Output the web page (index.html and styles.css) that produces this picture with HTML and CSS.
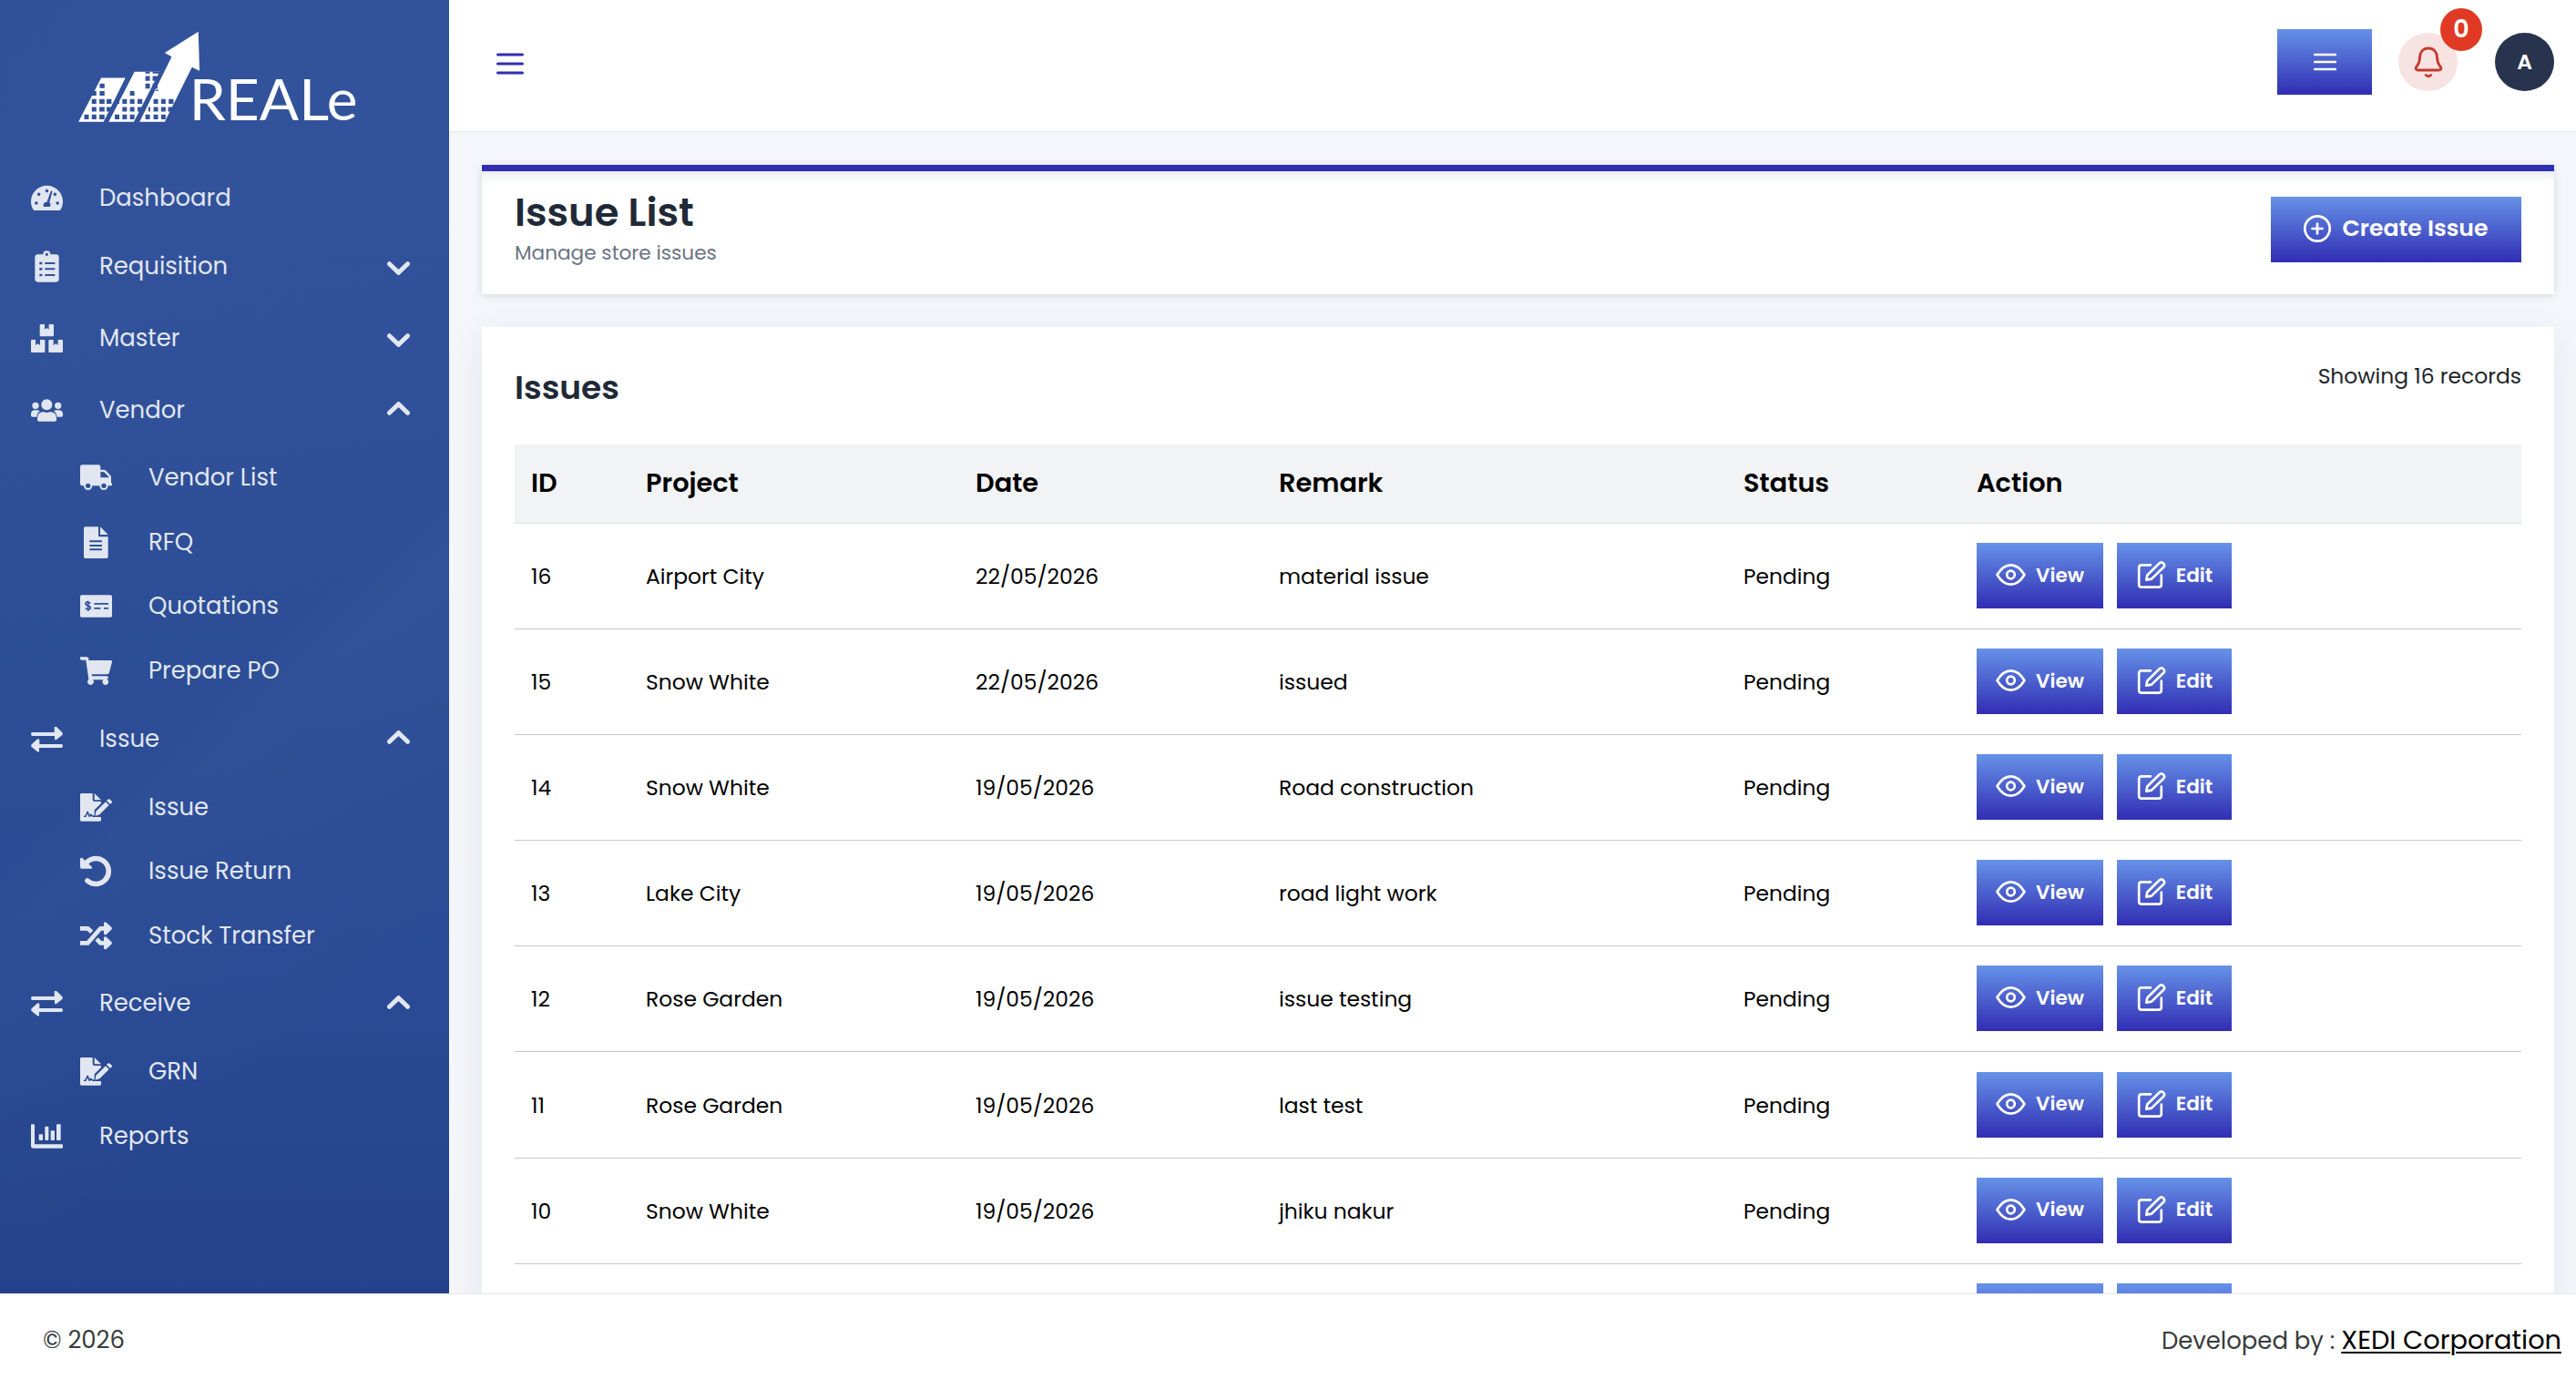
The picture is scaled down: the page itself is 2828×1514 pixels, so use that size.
FILE: index.html
```html
<!DOCTYPE html>
<html lang="en">
<head>
<meta charset="UTF-8">
<title>Issue List</title>
<link rel="stylesheet" href="styles.css">
</head>
<body>

<!-- icon sprite -->
<svg class="sprite">
    <symbol id="gauge" viewBox="0 0 576 576">
        <path fill-rule="evenodd" d="M288 62C129 62 0 191 0 350c0 53 14 102 39 145 6 10 16 15 27 15h444c11 0 21-5 27-15 25-43 39-92 39-145C576 191 447 62 288 62zM288 128a30 30 0 1 1 0 60 30 30 0 0 1 0-60zM142 190a30 30 0 1 1 0 60 30 30 0 0 1 0-60zM96 348a30 30 0 1 1 0 60 30 30 0 0 1 0-60zM480 348a30 30 0 1 1 0 60 30 30 0 0 1 0-60zM434 190a30 30 0 1 1 0 60 30 30 0 0 1 0-60zM358 160c14-8 30 0 27 18l-51 190c28 22 22 56 10 75H232c-20-34-4-85 56-87z"/>
    </symbol>
    <symbol id="clipboard" viewBox="0 0 105 105">
        <path fill-rule="evenodd" d="M23 13H40a12 12 0 0 1 24 0H82q10 0 10 10V94q0 10-10 10H23q-10 0-10-10V23q0-10 10-10zM52 8a5 5 0 1 0 0 10 5 5 0 0 0 0-10zM28 38h9v8h-9zM28 57h9v8h-9zM28 77h9v8h-9zM46 39h33v6H46zM46 58h33v6H46zM46 78h33v6H46z"/>
    </symbol>
    <symbol id="boxes" viewBox="0 0 105 105">
        <path d="M32 6H45V23l7-5 7 5V6H72q3 0 3 3V43q0 3-3 3H32q-3 0-3-3V9q0-3 3-3zM3 57H15V75l8-5 7 5V57H43q3 0 3 3V96q0 3-3 3H3q-3 0-3-3V60q0-3 3-3zM61 57H74V75l8-5 7 5V57H102q3 0 3 3V96q0 3-3 3H61q-3 0-3-3V60q0-3 3-3z"/>
    </symbol>
    <symbol id="users" viewBox="0 0 105 105">
        <circle cx="52" cy="34" r="18"/><circle cx="15" cy="37" r="11"/><circle cx="89" cy="37" r="11"/>
        <path d="M38 58h5q9 4 18 0h5q18 2 18 21v4q0 6-6 6H27q-6 0-6-6V79q0-19 17-21zM12 52h9q5 0 8 3-9 6-10 19H5q-5 0-5-5V64q0-10 12-12zM84 52h9q12 2 12 12v5q0 5-5 5H86q-2-13-10-19 3-3 8-3z"/>
    </symbol>
    <symbol id="truck" viewBox="0 0 105 105">
        <path fill-rule="evenodd" d="M7 10H60q7 0 7 7V26H78q4 0 7 3l14 15q3 3 3 7V69q3 0 3 5t-4 5H92a14 14 0 0 1-28 0H40a14 14 0 0 1-28 0H7q-7 0-7-7V17q0-7 7-7zM67 33V52H96L79 34zM26 71a8 8 0 1 0 0 16 8 8 0 0 0 0-16zM78 71a8 8 0 1 0 0 16 8 8 0 0 0 0-16z"/>
    </symbol>
    <symbol id="file" viewBox="0 0 105 105">
        <path fill-rule="evenodd" d="M17 1H60V29q0 5 5 5H92V100q0 5-5 5H17q-5 0-5-5V6q0-5 5-5zM31 46H72v6H31zM31 60H72v6H31zM31 73H72v6H31z"/><path d="M66 1L92 27H66z"/>
    </symbol>
    <symbol id="money" viewBox="0 0 105 105">
        <path fill-rule="evenodd" d="M5 16H100q5 0 5 5V84q0 5-5 5H5q-5 0-5-5V21q0-5 5-5zM46 42H93v5H46zM46 57H67v5H46zM78 57H93v5H78z"/>
        <path class="cut" d="M34 43q-16-8-16 1c0 9 16 5 16 14q0 9-17 2M26 35v34"/>
    </symbol>
    <symbol id="cart" viewBox="0 0 105 105">
        <path d="M0 7H22q5 0 6 5V18H101q5 0 4 5L96 58q-1 6-7 6H38l1 6H87q6 0 6 5 0 4-5 5a10 10 0 1 1-12 2H42a10 10 0 1 1-14-1L19 17H5Q0 17 0 12z"/>
    </symbol>
    <symbol id="swap" viewBox="0 0 105 105">
        <path d="M5 30H77V13q3-4 8 0L103 31q3 4 0 8L85 53q-4 3-7 0V42H5q-5 0-5-6t5-6zM100 69H28V54q-3-4-8-1L2 70q-3 4 0 8l18 15q5 3 7 0V81h73q5 0 5-6t-5-6z"/>
    </symbol>
    <symbol id="signature" viewBox="0 0 105 105">
        <path d="M4 6H41V27q0 6 6 6H69V39L47 61V79q-5 0-7-1-5-8-9-1L27 67q-2-5-5 0l-5 12-5 1v4h7l6-11 3 10h5l4-3 4 4H69V94q0 4-4 4H4q-4 0-4-4V10q0-4 4-4zM47 6L69 28H47zM52 65L84 34l11 11-31 31-14 4zM87 30l4-4q4-3 8 1l4 4q4 4 0 7l-4 4z"/>
    </symbol>
    <symbol id="undo" viewBox="0 0 105 105">
        <path class="line w17" d="M17 29A42 42 0 1 1 24 84"/><path d="M0 12q2-6 7-3L39 39q1 5-3 5H5q-5 0-5-5z"/>
    </symbol>
    <symbol id="shuffle" viewBox="0 0 105 105">
        <path class="line w14" d="M0 28H25L38 40M0 76H25L67 28H82M54 63L67 76H82"/>
        <path d="M78 10q3-6 8-2l17 16q3 4 0 8L86 48q-5 3-8-2zM78 58q3-6 8-2l17 16q3 4 0 8L86 96q-5 3-8-2z"/>
    </symbol>
    <symbol id="chart" viewBox="0 0 105 105">
        <path d="M3 13H9q3 0 3 3V79h90q3 0 3 3v7q0 3-3 3H8Q0 92 0 84V16q0-3 3-3z"/>
        <rect x="26" y="46" width="13" height="20" rx="3"/><rect x="46" y="20" width="12" height="46" rx="3"/><rect x="65" y="34" width="13" height="32" rx="3"/><rect x="84" y="13" width="14" height="53" rx="3"/>
    </symbol>
    <symbol id="chevron" viewBox="0 0 25 15">
        <path class="line" d="M2.5 2.7L12.5 12.3L22.500 2.7"/>
    </symbol>
    <symbol id="eye" viewBox="0 0 34 34">
        <path d="M1.500 17C4.500 12 9 6.300 16.500 6.300S28.500 12 31.500 17C28.500 22 24 27.700 16.500 27.700S4.500 22 1.500 17z"/><circle cx="16.500" cy="17" r="4.300"/>
    </symbol>
    <symbol id="edit" viewBox="0 0 34 34">
        <path d="M16 6.300H6.200Q3.200 6.300 3.200 9.300V27.700Q3.200 30.700 6.200 30.700H24.800Q27.800 30.700 27.800 27.700V17.700M11.300 22.700L12.300 17.500 25.500 4.500Q27.700 2.400 30 4.500T30 9L17 21.600z"/>
    </symbol>
</svg>

<div class="layout">
    <aside class="sidebar">
        <svg class="logo" viewBox="75 40 930 310">
            <g fill="#fff">
                <path d="M77 343L152 198H232L160 343zM177 343L262 178H345L260 343zM279 343L385 128L362 115L473 45L477 175L452 163L362 343z"/>
                <text x="443" y="338" font-size="186" textLength="556" lengthAdjust="spacingAndGlyphs">REALe</text>
            </g>
            <g fill="#31529a">
                <path d="M147 217h16v15h-16zM121 242h15v15h-15zM147 242h16v15h-16zM121 268h15v16h-15zM146 268h17v16h-17zM170 268h16v16h-16zM121 294h15v15h-15zM146 294h17v15h-17zM170 294h14v15h-14zM96 319h15v16h-15zM121 319h15v16h-15zM146 319h17v16h-17z"/>
                <path d="M247 242h15v15h-15zM222 268h15v16h-15zM247 268h15v16h-15zM272 268h16v16h-16zM222 294h15v15h-15zM247 294h15v15h-15zM272 294h13v15h-13zM197 319h15v16h-15zM222 319h15v16h-15zM247 319h15v16h-15zM298 178h15v6h-15zM298 192h15v16h-15zM298 217h15v16h-15zM322 178h26v6h-26zM322 192h20v16h-20zM322 217h16v16h-16zM206 268h6v16h-6z"/>
                <path d="M325 268h15v16h-15zM350 268h15v16h-15zM375 268h16v16h-16zM325 294h15v15h-15zM350 294h15v15h-15zM373 294h14v15h-14zM298 319h15v16h-15zM325 319h15v16h-15zM350 319h15v16h-15zM308 294h6v15h-6zM330 242h10v-8z"/>
            </g>
        </svg>
        <nav class="menu">
            <a class="item"><svg class="icon"><use href="#gauge"/></svg><span>Dashboard</span></a>
            <a class="item group"><svg class="icon"><use href="#clipboard"/></svg><span>Requisition</span><svg class="chevron"><use href="#chevron"/></svg></a>
            <a class="item group"><svg class="icon"><use href="#boxes"/></svg><span>Master</span><svg class="chevron"><use href="#chevron"/></svg></a>
            <a class="item group"><svg class="icon"><use href="#users"/></svg><span>Vendor</span><svg class="chevron up"><use href="#chevron"/></svg></a>
            <a class="item sub"><svg class="icon"><use href="#truck"/></svg><span>Vendor List</span></a>
            <a class="item sub"><svg class="icon"><use href="#file"/></svg><span>RFQ</span></a>
            <a class="item sub"><svg class="icon"><use href="#money"/></svg><span>Quotations</span></a>
            <a class="item sub"><svg class="icon"><use href="#cart"/></svg><span>Prepare PO</span></a>
            <a class="item group"><svg class="icon"><use href="#swap"/></svg><span>Issue</span><svg class="chevron up"><use href="#chevron"/></svg></a>
            <a class="item sub"><svg class="icon"><use href="#signature"/></svg><span>Issue</span></a>
            <a class="item sub"><svg class="icon"><use href="#undo"/></svg><span>Issue Return</span></a>
            <a class="item sub"><svg class="icon"><use href="#shuffle"/></svg><span>Stock Transfer</span></a>
            <a class="item group"><svg class="icon"><use href="#swap"/></svg><span>Receive</span><svg class="chevron up"><use href="#chevron"/></svg></a>
            <a class="item sub"><svg class="icon"><use href="#signature"/></svg><span>GRN</span></a>
            <a class="item"><svg class="icon"><use href="#chart"/></svg><span>Reports</span></a>
        </nav>
    </aside>

    <div class="main">
        <header class="topbar">
            <svg class="toggle" viewBox="0 0 30 24"><path d="M1.500 2h27M1.500 12h27M1.500 22h27"/></svg>
            <div class="tools">
                <button class="btn btn-menu"><svg viewBox="0 0 25 20"><path d="M1.300 2h22.400M1.300 10h22.400M1.300 18h22.400"/></svg></button>
                <div class="bell">
                    <svg viewBox="0 0 32 36"><path d="M16 3C10 3 6.500 7.500 6.500 13 6.500 19 5 20.500 2.800 23.300 1.500 25 2 27 4.500 27H27.500C30 27 30.500 25 29.200 23.300 27 20.500 25.500 19 25.500 13 25.500 7.500 22 3 16 3zM13.200 32.500Q16 35 18.800 32.500"/></svg>
                    <span class="badge">0</span>
                </div>
                <div class="avatar">A</div>
            </div>
        </header>

        <div class="content">
            <section class="card page-head">
                <div>
                    <h1>Issue List</h1>
                    <p>Manage store issues</p>
                </div>
                <button class="btn btn-create"><svg viewBox="0 0 30 30"><circle cx="15" cy="15" r="13.700"/><path d="M15 9.500v11M9.500 15h11"/></svg>Create Issue</button>
            </section>

            <section class="card list">
                <div class="list-head">
                    <h2>Issues</h2>
                    <span class="count">Showing 16 records</span>
                </div>
                <div class="table">
                    <div class="row head"><div>ID</div><div>Project</div><div>Date</div><div>Remark</div><div>Status</div><div>Action</div></div>
                    <div class="row"><div>16</div><div>Airport City</div><div>22/05/2026</div><div>material issue</div><div>Pending</div><div class="actions"><button class="btn"><svg><use href="#eye"/></svg>View</button><button class="btn edit"><svg><use href="#edit"/></svg>Edit</button></div></div>
                    <div class="row"><div>15</div><div>Snow White</div><div>22/05/2026</div><div>issued</div><div>Pending</div><div class="actions"><button class="btn"><svg><use href="#eye"/></svg>View</button><button class="btn edit"><svg><use href="#edit"/></svg>Edit</button></div></div>
                    <div class="row"><div>14</div><div>Snow White</div><div>19/05/2026</div><div>Road construction</div><div>Pending</div><div class="actions"><button class="btn"><svg><use href="#eye"/></svg>View</button><button class="btn edit"><svg><use href="#edit"/></svg>Edit</button></div></div>
                    <div class="row"><div>13</div><div>Lake City</div><div>19/05/2026</div><div>road light work</div><div>Pending</div><div class="actions"><button class="btn"><svg><use href="#eye"/></svg>View</button><button class="btn edit"><svg><use href="#edit"/></svg>Edit</button></div></div>
                    <div class="row"><div>12</div><div>Rose Garden</div><div>19/05/2026</div><div>issue testing</div><div>Pending</div><div class="actions"><button class="btn"><svg><use href="#eye"/></svg>View</button><button class="btn edit"><svg><use href="#edit"/></svg>Edit</button></div></div>
                    <div class="row"><div>11</div><div>Rose Garden</div><div>19/05/2026</div><div>last test</div><div>Pending</div><div class="actions"><button class="btn"><svg><use href="#eye"/></svg>View</button><button class="btn edit"><svg><use href="#edit"/></svg>Edit</button></div></div>
                    <div class="row"><div>10</div><div>Snow White</div><div>19/05/2026</div><div>jhiku nakur</div><div>Pending</div><div class="actions"><button class="btn"><svg><use href="#eye"/></svg>View</button><button class="btn edit"><svg><use href="#edit"/></svg>Edit</button></div></div>
                    <div class="row"><div></div><div></div><div></div><div></div><div></div><div class="actions"><button class="btn"></button><button class="btn edit"></button></div></div>
                </div>
            </section>
        </div>
    </div>
</div>

<footer class="footer">
    <span class="copy">© 2026</span>
    <span class="dev">Developed by : <a>XEDI Corporation</a></span>
</footer>

</body>
</html>
```
FILE: styles.css
```css
* {
    box-sizing: border-box;
    margin: 0;
    padding: 0;
}

body {
    font-family: Poppins, Inter, sans-serif;
    height: 1514px;
    overflow: hidden;
    background: #f5f6fb;
    color: #000;
}

.sprite {
    display: none;
}

.layout {
    display: flex;
    height: 1420px;
    overflow: hidden;
}

/* sidebar */
.sidebar {
    width: 493px;
    flex: none;
    padding-top: 33px;
    background:
        linear-gradient(140deg, rgba(20, 50, 130, 0.06) 0%, rgba(20, 50, 130, 0) 14%, rgba(20, 50, 130, 0.03) 52%, rgba(255, 255, 255, 0.015) 56%, rgba(255, 255, 255, 0) 80%),
        linear-gradient(#32539b, #31529a 25%, #2d4f97 50%, #2a4b95 75%, #24428b);
}

.logo {
    display: block;
    width: 310px;
    height: 103px;
    margin-left: 85px;
    overflow: visible;
    font-family: Lato, sans-serif;
}

.menu {
    margin-top: 46px;
}

.item {
    display: flex;
    align-items: center;
    height: 70.560px;
    padding: 0 43px 0 34px;
    color: #e2e6f1;
    font-size: 25.920px;
}

.group {
    height: 79px;
}

.sub {
    padding-left: 88px;
}

.icon {
    width: 35px;
    height: 35px;
    margin-right: 40px;
    fill: #e2e6f1;
}

.cut {
    fill: none;
    stroke: #2d4f97;
    stroke-width: 5;
}

.line {
    fill: none;
    stroke: #e2e6f1;
    stroke-width: 5;
    stroke-linecap: round;
    stroke-linejoin: miter;
}

.w17 {
    stroke-width: 17;
}

.w14 {
    stroke-width: 14;
    stroke-linecap: butt;
}

.chevron {
    width: 25px;
    height: 15px;
    margin-left: auto;
    margin-top: 4px;
}

.up {
    transform: rotate(180deg);
    margin-top: -3px;
}

/* top bar */
.main {
    flex: 1;
}

.topbar {
    display: flex;
    justify-content: space-between;
    height: 145px;
    padding: 32px 24px 0 52px;
    background: #fff;
    border-bottom: 1px solid #e9ebee;
}

.toggle {
    width: 30px;
    height: 24px;
    margin-top: 26px;
    stroke: #312db3;
    stroke-width: 3;
    stroke-linecap: round;
}

.tools {
    display: flex;
    align-items: center;
    height: 72px;
}

.btn {
    display: flex;
    align-items: center;
    justify-content: center;
    width: 139px;
    height: 72px;
    border: none;
    background: linear-gradient(#6692e8, #312db3);
    color: #fff;
    font-family: inherit;
    font-size: 21.600px;
    font-weight: 600;
    padding-bottom: 2px;
}

.btn svg {
    width: 34px;
    height: 34px;
    margin-right: 10px;
    fill: none;
    stroke: #fff;
    stroke-width: 2.700;
    stroke-linecap: round;
    stroke-linejoin: round;
}

.btn-menu {
    width: 104px;
    padding: 0;
}

.btn-menu svg {
    width: 25px;
    height: 20px;
    margin: 0;
}

.bell {
    position: relative;
    display: flex;
    align-items: center;
    justify-content: center;
    width: 65px;
    height: 64px;
    margin: 0 41px 0 29px;
    border-radius: 50%;
    background: #f7e3e2;
}

.bell svg {
    width: 32px;
    height: 36px;
    fill: none;
    stroke: #c53a2c;
    stroke-width: 2.800;
    stroke-linecap: round;
}

.badge {
    position: absolute;
    top: -27px;
    right: -27px;
    width: 46px;
    height: 47px;
    border-radius: 50%;
    background: #e03a24;
    color: #fff;
    font-size: 27px;
    font-weight: 600;
    line-height: 45px;
    text-align: center;
}

.avatar {
    width: 65px;
    height: 64px;
    border-radius: 50%;
    background: #28334e;
    color: #fff;
    font-size: 23.400px;
    font-weight: 600;
    line-height: 64px;
    text-align: center;
}

/* content */
.content {
    padding: 36px 24px 0 36px;
}

.card {
    background: #fff;
}

.page-head {
    display: flex;
    justify-content: space-between;
    height: 142px;
    padding: 28px 36px 0;
    border-top: 7px solid #312db3;
    box-shadow: 0 2px 8px rgba(30, 50, 70, 0.14), inset 0 10px 12px -6px rgba(60, 90, 90, 0.14);
}

h1 {
    font-size: 43.200px;
    font-weight: 600;
    line-height: 50px;
    color: #1f2937;
    margin-top: -8px;
}

.page-head p {
    font-size: 21.600px;
    line-height: 30px;
    margin-top: 5px;
    color: #6b7280;
}

.btn-create {
    width: 275px;
    font-size: 25.200px;
}

.btn-create svg {
    width: 30px;
    height: 30px;
    margin-right: 12px;
}

.list {
    height: 1200px;
    margin-top: 36px;
    padding: 0 36px;
    box-shadow: 0 10px 36px rgba(30, 40, 90, 0.08);
}

.list-head {
    display: flex;
    justify-content: space-between;
    height: 129px;
}

h2 {
    font-size: 36px;
    font-weight: 600;
    line-height: 44px;
    margin-top: 45px;
    color: #1f2937;
}

.count {
    font-size: 23.400px;
    line-height: 30px;
    margin-top: 39px;
    color: #212529;
}

.row {
    display: grid;
    grid-template-columns: 126px 362px 333px 510px 256px 1fr;
    align-items: center;
    height: 116.100px;
    border-bottom: 1px solid #c6c7c9;
    padding-left: 18px;
    font-size: 23.400px;
}

.row .btn {
    margin-top: -1px;
}

.head {
    height: 87px;
    background: #f2f3f5;
    border-color: #dee2e6;
    font-size: 28.800px;
    font-weight: 600;
    padding-bottom: 2px;
}

.actions {
    display: flex;
    gap: 15px;
}

.edit {
    width: 126px;
}

/* footer */
.footer {
    display: flex;
    justify-content: space-between;
    align-items: center;
    height: 94px;
    padding: 7px 16px 0 47px;
    border-top: 1px solid #e5e7eb;
    background: #fff;
    color: #373b3e;
    font-size: 25.920px;
}

.footer a {
    color: #000;
    font-size: 28.800px;
    text-decoration: underline;
    text-underline-offset: 3px;
    text-decoration-thickness: 2px;
}
```
